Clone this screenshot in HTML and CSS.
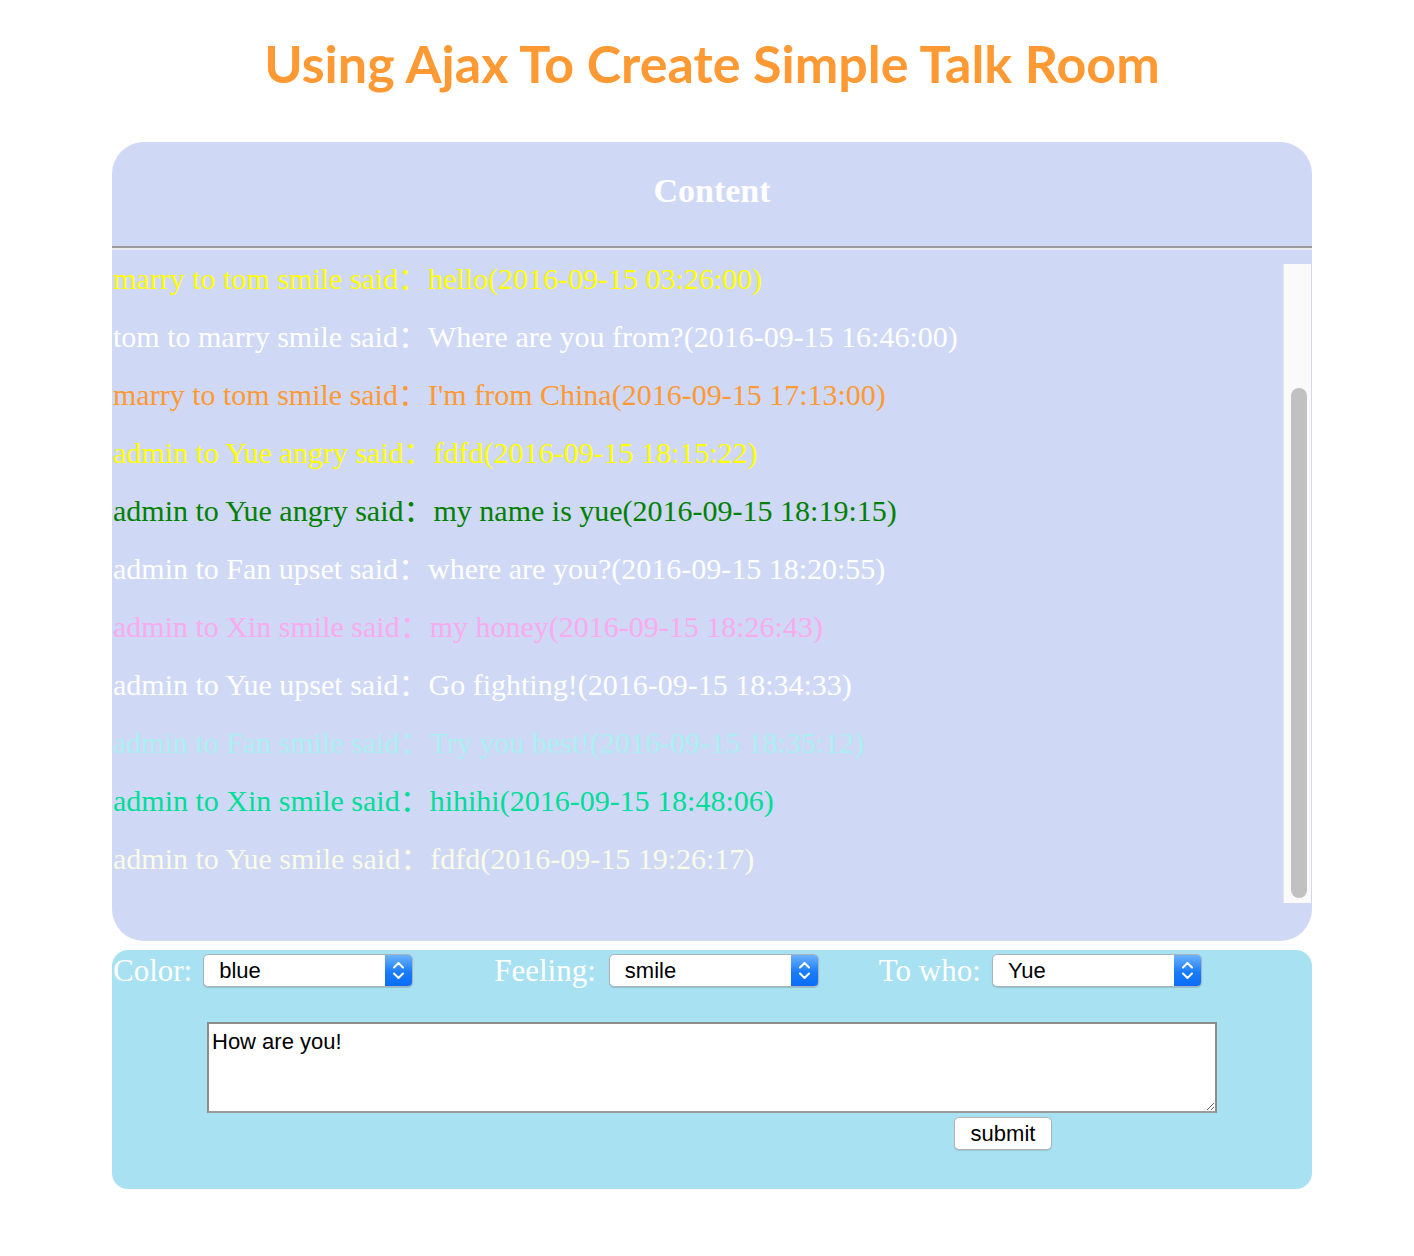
FILE: index.html
```html
<!DOCTYPE html>
<html lang="en">
<head>
<meta charset="utf-8">
<title>Using Ajax To Create Simple Talk Room</title>
<link rel="stylesheet" href="styles.css">
</head>
<body>
<h1 class="title">Using Ajax To Create Simple Talk Room</h1>
<div class="page">
  <section class="content-box">
    <div class="content-head">Content</div>
    <hr class="divider">
    <div class="content-body">
      <ul class="messages">
        <li class="c-yellow">marry to tom smile said：hello(2016-09-15 03:26:00)</li>
        <li class="c-white">tom to marry smile said：Where are you from?(2016-09-15 16:46:00)</li>
        <li class="c-orange">marry to tom smile said：I'm from China(2016-09-15 17:13:00)</li>
        <li class="c-yellow">admin to Yue angry said：fdfd(2016-09-15 18:15:22)</li>
        <li class="c-green">admin to Yue angry said：my name is yue(2016-09-15 18:19:15)</li>
        <li class="c-white">admin to Fan upset said：where are you?(2016-09-15 18:20:55)</li>
        <li class="c-pink">admin to Xin smile said：my honey(2016-09-15 18:26:43)</li>
        <li class="c-white">admin to Yue upset said：Go fighting!(2016-09-15 18:34:33)</li>
        <li class="c-turq">admin to Fan smile said：Try you best!(2016-09-15 18:35:12)</li>
        <li class="c-mint">admin to Xin smile said：hihihi(2016-09-15 18:48:06)</li>
        <li class="c-ivory">admin to Yue smile said：fdfd(2016-09-15 19:26:17)</li>
      </ul>
      <div class="scroll-track"><div class="scroll-thumb"></div></div>
    </div>
  </section>
  <form class="form-box">
    <div class="form-row">
      <div class="group g-color">
        <label class="lbl">Color:</label>
        <div class="select">
          <select class="select-input"><option>blue</option><option>red</option><option>green</option></select>
          <span class="spin"><svg width="27" height="33" viewBox="0 0 27 33"><polyline points="9,13.5 13.5,9 18,13.5" fill="none" stroke="#fff" stroke-width="2" stroke-linecap="round" stroke-linejoin="round"/><polyline points="9,19.5 13.5,24 18,19.5" fill="none" stroke="#fff" stroke-width="2" stroke-linecap="round" stroke-linejoin="round"/></svg></span>
        </div>
      </div>
      <div class="group g-feeling">
        <label class="lbl">Feeling:</label>
        <div class="select">
          <select class="select-input"><option>smile</option><option>angry</option><option>upset</option></select>
          <span class="spin"><svg width="27" height="33" viewBox="0 0 27 33"><polyline points="9,13.5 13.5,9 18,13.5" fill="none" stroke="#fff" stroke-width="2" stroke-linecap="round" stroke-linejoin="round"/><polyline points="9,19.5 13.5,24 18,19.5" fill="none" stroke="#fff" stroke-width="2" stroke-linecap="round" stroke-linejoin="round"/></svg></span>
        </div>
      </div>
      <div class="group g-who">
        <label class="lbl">To who:</label>
        <div class="select">
          <select class="select-input"><option>Yue</option><option>Fan</option><option>Xin</option></select>
          <span class="spin"><svg width="27" height="33" viewBox="0 0 27 33"><polyline points="9,13.5 13.5,9 18,13.5" fill="none" stroke="#fff" stroke-width="2" stroke-linecap="round" stroke-linejoin="round"/><polyline points="9,19.5 13.5,24 18,19.5" fill="none" stroke="#fff" stroke-width="2" stroke-linecap="round" stroke-linejoin="round"/></svg></span>
        </div>
      </div>
    </div>
    <textarea class="msg-input">How are you!</textarea>
    <button type="button" class="submit">submit</button>
  </form>
</div>
</body>
</html>
```
FILE: styles.css
```css
html, body {
  margin: 0;
  padding: 0;
  background: #ffffff;
}

.title {
  margin: 33px 0 49px 10px;
  line-height: 60px;
  text-align: center;
  font-family: "Lato", "Open Sans", sans-serif;
  font-weight: 700;
  font-size: 52px;
  color: #ff9933;
}

.page {
  width: 1200px;
  margin-left: 112px;
}

.content-box {
  height: 799px;
  background: #cfd8f5;
  border-radius: 32px;
  display: flex;
  flex-direction: column;
}

.content-head {
  height: 98px;
  padding-bottom: 6px;
  display: flex;
  align-items: center;
  justify-content: center;
  font-family: "Liberation Serif", serif;
  font-weight: 700;
  font-size: 34px;
  color: #ffffff;
}

.divider {
  margin: 0;
  height: 0;
  border: none;
  border-top: 2px solid #9b9b9b;
  border-bottom: 2px solid #e9ebf0;
}

.content-body {
  display: flex;
  align-items: flex-start;
}

.messages {
  flex: 1;
  list-style: none;
  margin: 0;
  padding: 0 0 0 1px;
  font-family: "Liberation Serif", "Noto Sans CJK SC", serif;
  font-size: 30px;
  line-height: 58px;
  white-space: nowrap;
}

.c-yellow { color: #ffff00; }
.c-white { color: #ffffff; }
.c-orange { color: #ff9933; }
.c-green { color: #008000; }
.c-pink { color: #faaaee; }
.c-turq { color: #aaf0f0; }
.c-mint { color: #00dd99; }
.c-ivory { color: #fafbe8; }

.scroll-track {
  width: 28px;
  height: 639px;
  margin-top: 14px;
  margin-right: 1px;
  background: #fafafa;
  border-left: 1px solid #e6e6e6;
  box-sizing: border-box;
}

.scroll-thumb {
  width: 16px;
  height: 510px;
  margin-top: 124px;
  margin-left: 7px;
  background: #c1c1c1;
  border-radius: 8px;
}

.form-box {
  margin: 9px 0 0;
  height: 239px;
  box-sizing: border-box;
  padding-top: 4px;
  background: #a8e2f2;
  border-radius: 16px;
}

.form-row {
  display: flex;
  align-items: center;
  height: 33px;
}

.group {
  display: flex;
  align-items: center;
}

.g-color { margin-left: 1px; }
.g-feeling { margin-left: 81px; }
.g-who { margin-left: 60px; }

.lbl {
  font-family: "Liberation Serif", serif;
  font-size: 31px;
  color: #ffffff;
  margin-right: 11px;
  line-height: 33px;
}

.g-feeling .lbl {
  margin-right: 13px;
}

.g-who .lbl {
  margin-right: 11px;
}

.select {
  width: 210px;
  height: 33px;
  box-sizing: border-box;
  display: flex;
  background: #ffffff;
  border: 1px solid #a9b3bd;
  border-radius: 5px;
  box-shadow: 0 1px 1px rgba(0, 0, 0, 0.15);
  overflow: hidden;
}

.select-input {
  flex: 1;
  min-width: 0;
  -webkit-appearance: none;
  appearance: none;
  border: none;
  background: transparent;
  padding: 0 0 0 15px;
  margin: 0;
  font-family: "Liberation Sans", Arial, sans-serif;
  font-size: 22px;
  color: #000000;
  outline: none;
}

.spin {
  width: 27px;
  display: flex;
  align-items: center;
  justify-content: center;
  background: linear-gradient(#6db3fb, #1a7cf8 55%, #0b6df6);
}

.spin svg {
  display: block;
}

.msg-input {
  display: block;
  width: 1010px;
  height: 91px;
  box-sizing: border-box;
  margin: 35px 0 0 95px;
  padding: 5px 3px 3px;
  border: 2px solid #8d8d8d;
  border-bottom-color: #9a9a9a;
  background: #ffffff;
  font-family: "Liberation Sans", Arial, sans-serif;
  font-size: 22px;
  line-height: 26px;
  color: #000000;
  resize: both;
}

.submit {
  display: block;
  margin: 4px 0 0 842px;
  width: 98px;
  height: 33px;
  background: #ffffff;
  border: 1px solid #b4b4b4;
  border-radius: 5px;
  box-shadow: 0 1px 1px rgba(0, 0, 0, 0.12);
  font-family: "Liberation Sans", Arial, sans-serif;
  font-size: 22px;
  color: #000000;
  padding: 0;
}
```
